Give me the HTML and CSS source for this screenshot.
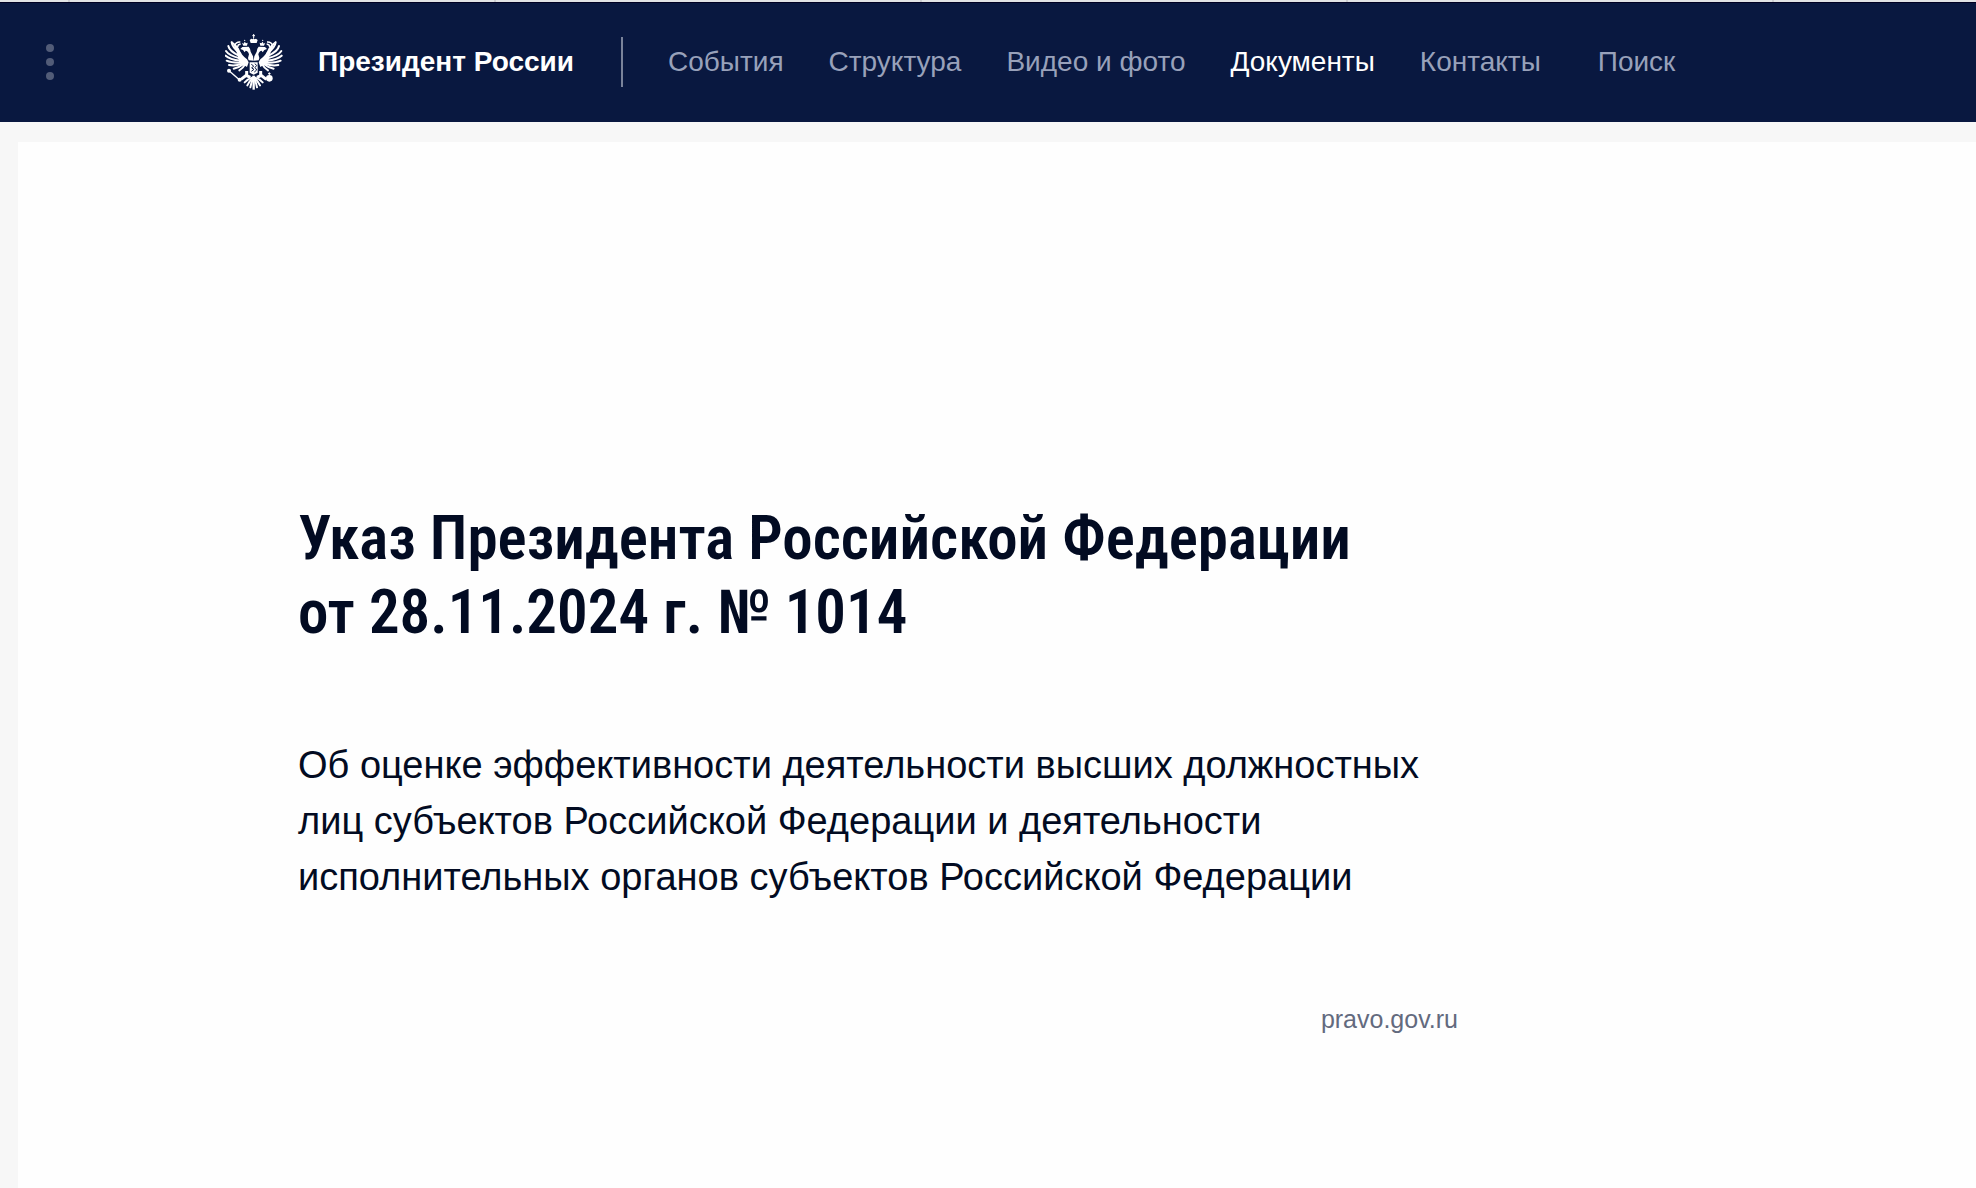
FILE: index.html
```
<!DOCTYPE html>
<html lang="ru">
<head>
  <meta charset="UTF-8" />
  <meta name="viewport" content="width=device-width, initial-scale=1" />
  <title>Указ Президента Российской Федерации</title>
  <link rel="stylesheet" href="styles.css">
</head>
<body>
  <div class="top-strip"></div>

  <header class="header">
    <button class="menu-btn" type="button" aria-label="Меню">
      <span class="dot"></span>
      <span class="dot"></span>
      <span class="dot"></span>
    </button>

    <a class="brand" href="#">
      <svg class="emblem" viewBox="32 18 174 174" aria-hidden="true">
        <defs>
          <g id="half">
            <!-- wing -->
            <g fill="none" stroke="#fff" stroke-width="6" stroke-linecap="round">
              <path d="M52 46 Q54 62 78 80" />
              <path d="M42 57 Q45 73 76 87" />
              <path d="M35 72 Q43 85 76 94" />
              <path d="M34 86 Q46 97 78 101" />
              <path d="M37 101 Q52 108 80 107" />
              <path d="M44 114 Q62 118 84 110" />
              <path d="M58 125 Q74 122 88 111" />
              <path d="M75 130 Q86 124 92 112" />
            </g>
            <path fill="#fff" d="M51 42 Q70 54 76 70 Q82 86 98 97 L103 106 L98 120 L88 114 L74 104 L70 84 Q64 64 51 42Z" />
            <!-- head and neck -->
            <path fill="#fff" d="M78 66 L84 60 L103 59 Q108 63 109 74 L116 88 L118 101 L103 100 L101 93 L104 82 Q101 71 94 71 L91 76 L86 69Z" />
            <!-- small crown -->
            <path fill="#fff" d="M87 56 L83 47 L88 50 L91 44 L95 49 L100 47 L98 56Z" />
            <circle cx="91" cy="40" r="2" fill="#fff" />
            <path fill="none" stroke="#fff" stroke-width="4" d="M78 45 Q65 44 62 54 M79 51 Q70 52 70 60" />
            <!-- tail -->
            <g fill="none" stroke="#fff" stroke-width="6" stroke-linecap="round">
              <path d="M115 151 Q102 155 91 166" />
              <path d="M116 152 Q105 163 99 175" />
              <path d="M117 153 Q110 168 108 181" />
            </g>
            <path fill="none" stroke="#fff" stroke-width="9" d="M97 132 V144 L80 157 M95 145 L108 151" />
          </g>
        </defs>
        <use href="#half" />
        <use href="#half" transform="matrix(-1 0 0 1 236 0)" />
        <path fill="#fff" d="M109 48 L106 39 L111 35 L116 37 L118 32 L120 37 L125 35 L130 39 L127 48Z" />
        <path stroke="#fff" stroke-width="3" d="M118 21 V33 M114 26 H122" />
        <!-- shield -->
        <path fill="#fff" d="M106 106 H130 V137 L118 143 L106 137Z" />
        <path fill="none" stroke="#091840" stroke-width="3" d="M111 112 L118 117 L112 123 L119 127 L111 133 M122 110 L127 116 L122 121 L127 129 L120 135" />
        <path stroke="#fff" stroke-width="7" d="M118 146 V188" />
        <!-- sceptre and orb -->
        <path stroke="#fff" stroke-width="4" d="M44 131 L76 159" />
        <circle cx="44" cy="131" r="6" fill="#fff" />
        <circle cx="76" cy="158" r="6" fill="#fff" />
        <circle cx="165" cy="154" r="10" fill="#fff" />
        <path stroke="#fff" stroke-width="3" d="M165 136 V147 M161 140 H169" />
      </svg>
      <span>Президент России</span>
    </a>

    <nav class="nav">
      <a href="#">События</a>
      <a href="#">Структура</a>
      <a href="#">Видео и фото</a>
      <a class="active" href="#">Документы</a>
      <a href="#">Контакты</a>
      <a class="search" href="#">Поиск</a>
    </nav>
  </header>

  <main class="page">
    <article class="document">
      <h1>Указ Президента Российской Федерации<br>от 28.11.2024 г. № 1014</h1>
      <p>Об оценке эффективности деятельности высших должностных<br>
        лиц субъектов Российской Федерации и деятельности<br>
        исполнительных органов субъектов Российской Федерации</p>
      <a class="source" href="#">pravo.gov.ru</a>
    </article>
  </main>
</body>
</html>
```
FILE: styles.css
```
* {
  box-sizing: border-box;
}

body {
  margin: 0;
  min-height: 100vh;
  display: flex;
  flex-direction: column;
  font-family: "Liberation Sans", Arial, sans-serif;
  background-color: #f7f7f7;
  color: #020b22;
}

a {
  color: inherit;
  text-decoration: none;
}

/* edge of the tab bar */
.top-strip {
  height: 2px;
  background: repeating-linear-gradient(to right, #e1e3e5 0 424px, #cbcdd0 424px 426px) -356px 0;
  background-size: calc(100% + 356px) 2px;
}

.header {
  display: flex;
  align-items: center;
  height: 120px;
  padding-bottom: 2px;
  border-top: 1px solid #000022;
  background-color: #091840;
  color: #fff;
}

.menu-btn {
  display: flex;
  flex-direction: column;
  gap: 6px;
  margin: 0 171px 0 46px;
  padding: 0;
  border: none;
  background: none;
  cursor: pointer;
}

.dot {
  width: 8px;
  height: 8px;
  border-radius: 50%;
  background-color: #525c78;
}

.brand {
  display: flex;
  align-items: center;
  gap: 35px;
  padding-right: 47px;
  font-size: 28px;
  font-weight: bold;
  white-space: nowrap;
}

.emblem {
  width: 58px;
  height: 58px;
}

.nav {
  display: flex;
  align-items: center;
  gap: 45px;
  height: 50px;
  padding-left: 45px;
  border-left: 2px solid #7a839a;
  color: #98a1ba;
  font-size: 28px;
  white-space: nowrap;
}

.nav a:hover,
.nav .active {
  color: #fff;
}

.nav .search {
  margin-left: 12px;
}

.page {
  flex: 1;
  margin: 20px 0 0 18px;
  padding: 359px 280px 120px;
  background-color: #fefefe;
}

.document {
  display: flex;
  flex-direction: column;
  max-width: 1160px;
}

h1 {
  margin: 0;
  font-family: "Roboto Condensed", "Arial Narrow", sans-serif;
  font-size: 61px;
  font-weight: 600;
  line-height: 74px;
  white-space: nowrap;
}

p {
  margin: 88px 0 0;
  font-size: 38px;
  line-height: 56px;
  white-space: nowrap;
}

.source {
  align-self: flex-end;
  margin-top: 98px;
  color: #636a7e;
  font-size: 25px;
  line-height: 32px;
}
```
